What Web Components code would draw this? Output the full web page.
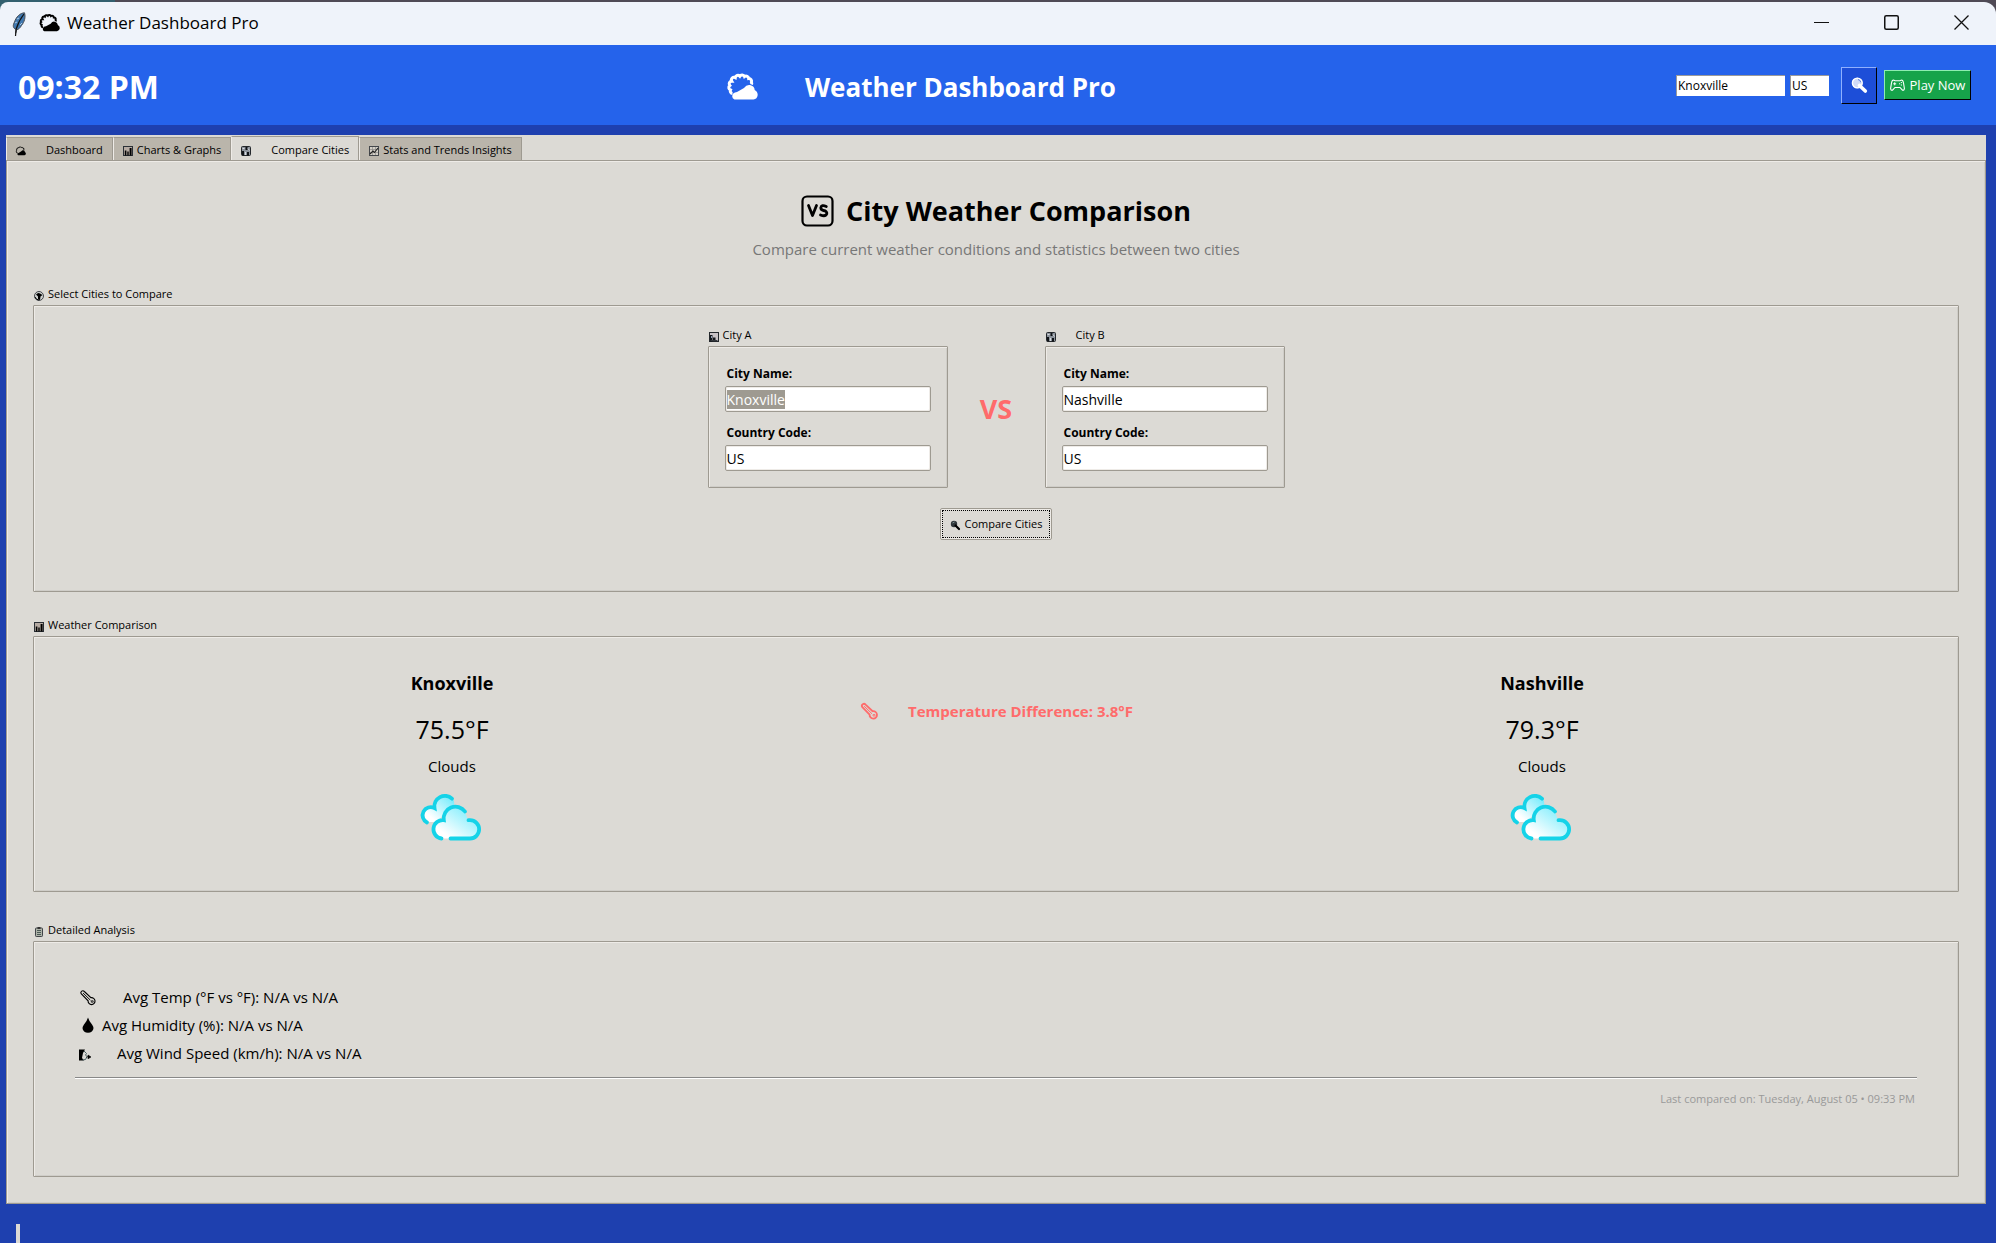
<!DOCTYPE html>
<html lang="en">
<head>
<meta charset="utf-8">
<title>Weather Dashboard Pro</title>
<style>
  html, body { margin: 0; }
  body { font-family: "Open Sans", "Noto Sans", sans-serif; font-size: 11px; line-height: 16px; color: #000; background: #1e40af; }
</style>
</head>
<body>
<weather-app></weather-app>

<script>
const ICONS = {
  suncloud: ['0 0 30 26', `<path d="M4.500 19.500 A2.500 2.500 0 0 1 2.500 16 A2.600 2.600 0 0 1 1.800 11.500 A2.600 2.600 0 0 1 3.800 7.200 A2.600 2.600 0 0 1 7.300 3.600 A2.600 2.600 0 0 1 11.800 2.200 A2.600 2.600 0 0 1 16.500 2.600 A2.600 2.600 0 0 1 20.700 4.600 A2.600 2.600 0 0 1 23.400 8.200 Q24 9.500 23.600 10.500" fill="none" stroke="currentColor" stroke-width="3"/><path d="M6.500 25.500 Q4.200 24.500 4.200 22.200 Q4.500 18.500 9 18 L16 14 Q18.500 10.300 22 11 Q26.500 12 26.700 16 Q29.700 17.500 29.700 21 Q29.200 25 25.500 25.500 Z" fill="currentColor"/>`],
  feather: ['0 0 14 24', `<path d="M3.500 21.500 L4 17.500 C.5 16 .8 13 2.500 10 C4 5 8 1 12.500 .8 C13.800 5 12.500 10 9.500 13.500 C8 16 6.500 17.500 4.600 17.800 Z" fill="#3f77ae" stroke="#4c4f55"/><path d="M3.500 24 L4.200 17 Q6.500 9 12 2" fill="none" stroke="#111" stroke-width="1.200"/><path d="M3 11 l2-1 M5 7 l2-1 M8 13 l2-2" stroke="#aecbe6"/>`],
  minimize: ['0 0 15 15', `<path d="M0 7.500 H15" stroke="currentColor"/>`],
  maximize: ['0 0 15 15', `<rect x=".75" y=".75" width="13.500" height="13.500" rx="1.500" fill="none" stroke="currentColor" stroke-width="1.500"/>`],
  close: ['0 0 15 15', `<path d="M.5 .5 L14.500 14.500 M14.500 .5 L.5 14.500" stroke="currentColor" stroke-width="1.300"/>`],
  magnify: ['0 0 16 16', `<circle cx="6.300" cy="6" r="5.200" fill="currentColor" opacity=".8"/><circle cx="6.300" cy="6" r="4.900" fill="none" stroke="currentColor" stroke-width="1.400"/><path d="M8.500 8.500 L14.300 14" stroke="currentColor" stroke-width="3.600" stroke-linecap="round"/><path d="M7 2.500 a3.500 3.500 0 0 1 2.800 2.800" fill="none" stroke="#5b7fe0"/>`],
  magnifyDark: ['0 0 10 10', `<circle cx="4" cy="4" r="3.200" fill="#30363a"/><path d="M2.500 3 l2-1" stroke="#7b9190"/><path d="M5.500 5.500 L9 9" stroke="#000" stroke-width="2.200" stroke-linecap="round"/>`],
  gamepad: ['0 0 15 12', `<path d="M3.500 1 L5 1.700 H10 L11.500 1 Q13 1 13.500 4 L14.400 9.500 Q14.200 11.600 12.500 11.200 L10 8.500 H5 L2.500 11.200 Q.8 11.600 .6 9.500 L1.500 4 Q2 1 3.500 1 Z" fill="none" stroke="currentColor" stroke-width="1.100"/><path d="M3.200 4.800 h3 M4.700 3.300 v3 M9 4.800 h1.200 M10.800 3.600 h1.200 M10.800 6 h1.200" stroke="currentColor"/>`],
  vs: ['0 0 33 32', `<rect x="1.500" y="1.500" width="30" height="29" rx="4.500" fill="none" stroke="currentColor" stroke-width="2.200"/><path d="M7.500 10.500 L11.500 20.500 L15.500 10.500" fill="none" stroke="currentColor" stroke-width="2.800" stroke-linejoin="round" stroke-linecap="round"/><path d="M25.300 11.500 Q20.500 9.300 19.800 12.800 Q19.800 15 22.500 15.500 Q26.300 16.200 25.800 18.800 Q24.500 22 19.500 20" fill="none" stroke="currentColor" stroke-width="2.800" stroke-linecap="round"/>`],
  bars: ['0 0 10 10', `<rect x=".5" y=".5" width="9" height="9" fill="#b5aaa2" stroke="#2b3036"/><rect x="1.800" y="4.500" width="1.600" height="5" fill="#000"/><rect x="4.300" y="5.500" width="1.400" height="4" fill="#000"/><rect x="6.600" y="2" width="2" height="7.500" fill="#000"/>`],
  city: ['0 0 10 10', `<rect x=".5" y=".5" width="9" height="9" rx="1" fill="#8b929b" stroke="#24282c"/><path d="M1 5 h2 v4.500 h-2 z M6 6 h2 v3.500 h-2 z M4.500 1 h2 v3 h-2 z" fill="#101317"/><path d="M1.500 2.500 h2 M7 2.500 l1.500 2 M4.500 6 v3" stroke="#d8dbe0"/>`],
  cityA: ['0 0 10 10', `<rect x=".5" y=".5" width="9" height="9" fill="#c9c3c6" stroke="#24282c"/><path d="M1 3 h2.500 v6.500 h-2.500 z M4 5.500 h2.500 v3.500 h-2.500 z" fill="#14181d"/><path d="M1.500 8.500 h7" stroke="#35393e"/><path d="M2.500 4 v2" stroke="#8fa0b8"/>`],
  trend: ['0 0 10 10', `<rect x=".5" y=".5" width="9" height="9" fill="#d3cfc6" stroke="#44474b"/><path d="M3.500 1 v8 M6.500 1 v8 M1 3.500 h8 M1 6.500 h8" stroke="#8d8a86" stroke-width=".7"/><path d="M1 8 L4 5 L5.500 6.500 L9 2" fill="none" stroke="#222" stroke-width="1.100"/>`],
  globe: ['0 0 10 10', `<circle cx="5" cy="5" r="4.500" fill="#cfd2d0" stroke="#33363b" stroke-width=".9"/><path d="M2 3.500 Q4 1 6 2.500 L8.500 4 L6.500 5.500 L6 9 L4 8.500 L4 5.500 Z" fill="#000"/><path d="M1 6 Q2 8.500 4.500 9" fill="none" stroke="#000"/>`],
  clip: ['0 0 8 10', `<rect x=".5" y="1" width="7" height="8.500" rx=".8" fill="#aeb3a9" stroke="#404448"/><path d="M2 3.500 h4 M2 5.500 h4 M2 7.500 h4" stroke="#4b5a55"/><rect x="2.500" y="0" width="3" height="2" fill="#333"/>`],
  thermo: ['0 0 17 16', `<path d="M1.800 1.200 Q3.300 .2 4.600 1.600 L11.600 8.200 A3.700 3.700 0 1 1 8.600 11.500 L1.200 4 Q.2 2.300 1.800 1.200 Z" fill="none" stroke="currentColor" stroke-width="var(--line, 1.200)"/><path d="M3.200 3.200 L11 10.800" stroke="currentColor"/><path d="M12 11.500 h2 v1.500 h-2 z" fill="none" stroke="currentColor" stroke-width=".8"/>`],
  drop: ['0 0 12 16', `<path d="M6 .4 Q7 4 10 7.500 Q11.500 9.500 11.500 11 A5.500 4.800 0 0 1 .5 11 Q.5 9.500 2 7.500 Q5 4 6 .4 Z" fill="currentColor"/>`],
  wind: ['0 0 12 12', `<path d="M0 .5 h6 L4 4 L3 9 L5 11.500 H0 Z" fill="#000"/><path d="M5 2 L7.500 4.500 L6.500 6 L8 7.500 L6.500 10.500 L3.500 11" fill="none" stroke="#4a6062"/><path d="M7.500 8 L9.500 7.500 M9 6 L12 8 L9 9.800 Z" fill="#000" stroke="#000" stroke-width=".6"/>`],
  clouds: ['0 0 60 47', `<defs><linearGradient id="g" x1="0" y1="1" x2="1" y2="0"><stop offset=".2" stop-color="#fff"/><stop offset="1" stop-color="#66eafc"/></linearGradient></defs><path d="M5.500 28 A8 8 0 0 1 12.500 14 A10.800 10.800 0 0 1 31 5 Q36 14 22 20 L15 28 Z" fill="url(#g)"/><path d="M5 28.500 A8 8 0 0 1 12.500 14 A10.500 10.500 0 0 1 30 4.700" fill="none" stroke="#15d3e8" stroke-width="3.800" stroke-linecap="round"/><path d="M19.500 44.500 A9.200 9.200 0 0 1 21.800 26.200 A11.800 11.800 0 0 1 43 17.500 L46 26.200 H48 A9 9 0 0 1 48 44.500 Z" fill="url(#g)"/><path d="M19.500 44.500 A9.200 9.200 0 0 1 21.800 26.200 A11.800 11.800 0 0 1 43 17.500 M46.500 26.200 H48 A9 9 0 0 1 48 44.500 H28.500" fill="none" stroke="#15d3e8" stroke-width="3.800" stroke-linecap="round"/>`]
};

const component = (name, html, ready) => customElements.define(name, class extends HTMLElement {
  connectedCallback() {
    if (this.shadowRoot) return;
    const root = this.attachShadow({ mode: 'open' });
    root.innerHTML = typeof html === 'function' ? html(this) : html;
    if (ready) ready(this, root);
  }
});

component('ui-icon', el => {
  const [box, body] = ICONS[el.getAttribute('name')];
  const w = el.getAttribute('w'), h = el.getAttribute('h');
  return `<style>:host{display:inline-flex;flex:none}svg{display:block;overflow:visible}</style>
  <svg width="${w}" height="${h}" viewBox="${box}" aria-hidden="true">${body}</svg>`;
});

component('title-bar', `
<style>
  :host { display: block; background: linear-gradient(90deg, #33606f 115px, #4f4a55 115px); padding-top: 2px; }
  .bar { display: flex; align-items: center; height: 43px; padding-left: 12px; background: #eff3fa; border-radius: 8px 12px 0 0; font-size: 17px; }
  .name { display: flex; align-items: center; gap: 7px; flex: 1; margin-left: 14px; padding-bottom: 2px; }
  button { display: flex; align-items: center; justify-content: center; width: 70px; height: 43px; padding: 0 0 2px; border: 0; background: none; color: #111; }
</style>
<div class="bar">
  <ui-icon name="feather" w="14" h="24"></ui-icon>
  <div class="name"><ui-icon name="suncloud" w="20" h="18"></ui-icon><span>Weather Dashboard Pro</span></div>
  <button aria-label="Minimize"><ui-icon name="minimize" w="15" h="15"></ui-icon></button>
  <button aria-label="Maximize"><ui-icon name="maximize" w="15" h="15"></ui-icon></button>
  <button aria-label="Close"><ui-icon name="close" w="15" h="15"></ui-icon></button>
</div>`);

component('app-header', `
<style>
  :host { display: flex; align-items: center; height: 80px; box-sizing: border-box; padding: 0 25px 0 18px; background: #2563eb; color: #fff; }
  .clock { font-size: 32px; font-weight: 700; line-height: 44px; padding-top: 4px; }
  h1 { display: flex; align-items: center; justify-content: center; gap: 47px; flex: 1; margin: 0; padding: 4px 0 0 9px; font-size: 26px; line-height: 36px; }
  form { display: flex; align-items: center; }
  input { box-sizing: border-box; width: 109px; height: 21px; padding: 0 1px; border: solid; border-width: 1px 0 0 1px; border-color: #9a9a9a; border-radius: 0; background: #fff; color: #000; font: 12px "Open Sans", "Noto Sans", sans-serif; }
  .code { width: 39px; margin: 0 12px 0 5px; }
  button { display: flex; align-items: center; justify-content: center; box-sizing: border-box; padding: 0; border: 1px solid; color: #fff; font: 13px "Open Sans", "Noto Sans", sans-serif; }
  .search { width: 36px; height: 37px; margin-right: 7px; background: #1d4ed8; border-color: #8fb0ff #000 #000 #8fb0ff; }
  .play { width: 87px; height: 30px; gap: 5px; background: #16a34a; border-color: #8eeeb0 #000 #000 #8eeeb0; }
</style>
<div class="clock">09:32 PM</div>
<h1><ui-icon name="suncloud" w="30" h="26"></ui-icon><span>Weather Dashboard Pro</span></h1>
<form onsubmit="return false">
  <input aria-label="City" value="Knoxville">
  <input class="code" aria-label="Country code" value="US">
  <button class="search" aria-label="Search"><ui-icon name="magnify" w="16" h="16"></ui-icon></button>
  <button type="button" class="play"><ui-icon name="gamepad" w="15" h="12"></ui-icon><span>Play Now</span></button>
</form>`);

component('tab-item', el => `
<style>
  :host { display: block; }
  button { display: flex; align-items: center; gap: var(--gap, 4px); box-sizing: border-box; height: 23px; padding: 2px 9px 0; border: 1px solid #9e9a91; border-bottom: 0; border-left-color: #eeebe7; background: #bab5ab; color: #000; font: 11px/16px "Open Sans", "Noto Sans", sans-serif; }
  ui-icon { padding-top: 2px; }
  :host([selected]) button { height: 26px; padding-top: 1px; background: #dcdad5; }
</style>
<button role="tab" aria-selected="${el.hasAttribute('selected')}"><ui-icon name="${el.getAttribute('icon')}" w="10" h="10"></ui-icon><slot></slot></button>`);

component('tab-strip', `
<style>
  :host { display: flex; align-items: flex-end; height: 25px; }
  ::slotted([selected]) { margin-bottom: -2px; }
</style><slot></slot>`);

component('group-box', el => `
<style>
  :host { display: block; }
  .caption { display: flex; align-items: center; gap: var(--gap, 4px); margin-bottom: 3px; padding-left: 1px; line-height: 16px; }
  .caption ui-icon { padding-top: 4px; }
  .frame { border: 1px solid #9e9a91; border-radius: 1px; box-shadow: inset 1px 1px #eeebe7, inset -1px -1px #cfcdc8; padding: 1px; }
</style>
<div class="caption"><ui-icon name="${el.getAttribute('icon')}" w="10" h="10"></ui-icon><span>${el.getAttribute('caption')}</span></div>
<div class="frame"><slot></slot></div>`);

component('city-form', el => `
<style>
  :host { display: block; width: 206px; padding: 18px 15px 15px; }
  label { display: block; margin-bottom: 4px; padding-left: 2px; font-size: 12px; font-weight: 700; line-height: 16px; }
  input { display: block; box-sizing: border-box; width: 100%; height: 26px; padding: 0 1px; border: 1px solid #9e9a91; border-radius: 2px; outline: 0; background: #fff; box-shadow: inset 1px 1px #eeebe7, inset -1px -1px #eeebe7; color: #000; font: 14px "Open Sans", "Noto Sans", sans-serif; }
  input + label { margin-top: 13px; }
  ::selection { background: #9e9a91; color: #fff; }
</style>
<label for="city">City Name:</label><input id="city" value="${el.getAttribute('city')}">
<label for="code">Country Code:</label><input id="code" value="US">`,
(el, root) => {
  if (el.hasAttribute('active')) {
    const field = root.getElementById('city');
    field.focus();
    field.select();
  }
});

component('compare-form', `
<style>
  :host { display: flex; flex-direction: column; align-items: center; padding: 20px 0 50px; }
  .cities { display: flex; align-items: center; }
  .vs { width: 97px; padding-top: 2px; color: #ff6b6b; font-size: 27px; font-weight: 700; line-height: 36px; text-align: center; }
  button { display: flex; margin-top: 20px; padding: 1px; border: 1px solid #9e9a91; border-radius: 2px; background: #eeebe7; color: #000; font: 11px/16px "Open Sans", "Noto Sans", sans-serif; }
  .face { display: flex; align-items: center; gap: 5px; padding: 5px 7px; border: 1px dotted #000; background: #dcdad5; }
  .face ui-icon { padding-top: 2px; }
</style>
<div class="cities">
  <group-box icon="cityA" caption="City A"><city-form city="Knoxville" active></city-form></group-box>
  <div class="vs">VS</div>
  <group-box icon="city" caption="City B" style="--gap: 20px"><city-form city="Nashville"></city-form></group-box>
</div>
<button><span class="face"><ui-icon name="magnifyDark" w="10" h="10"></ui-icon><span>Compare Cities</span></span></button>`);

component('city-result', el => `
<style>
  :host { display: flex; flex-direction: column; align-items: center; flex: 1; }
  h3 { margin: 0; font-size: 18px; line-height: 24px; }
  .temp { margin: 17px 0 10px; font-size: 25px; line-height: 34px; }
  .sky { margin-bottom: 18px; font-size: 15px; line-height: 20px; }
</style>
<h3>${el.getAttribute('city')}</h3>
<div class="temp">${el.getAttribute('temp')}</div>
<div class="sky">Clouds</div>
<ui-icon name="clouds" w="60" h="47"></ui-icon>`);

component('compare-result', `
<style>
  :host { display: flex; padding: 33px 18px 49px 20px; }
  .diff { display: flex; align-items: center; align-self: flex-start; justify-content: center; gap: 30px; width: 296px; padding-top: 30px; color: #ff6b6b; font-size: 15px; font-weight: 700; line-height: 20px; --line: 1.800; }
</style>
<city-result city="Knoxville" temp="75.5°F"></city-result>
<div class="diff"><ui-icon name="thermo" w="17" h="16"></ui-icon><span>Temperature Difference: 3.8°F</span></div>
<city-result city="Nashville" temp="79.3°F"></city-result>`);

component('detail-analysis', `
<style>
  :host { display: block; padding: 40px 40px 68px; }
  ul { margin: 0; padding: 0 0 0 4px; list-style: none; font-size: 15px; line-height: 28px; }
  li { display: flex; align-items: center; }
  .pic { display: flex; justify-content: center; width: 17px; }
  .temp { gap: 27px; }
  .humid { gap: 6px; }
  .wind { gap: 21px; }
  .wind .pic { justify-content: flex-start; padding-top: 4px; }
  hr { height: 1px; margin: 10px 0 12px; border: 0; border-top: 1px solid #888; background: #fff; }
  .stamp { padding-right: 2px; color: #999; text-align: right; }
</style>
<ul>
  <li class="temp"><span class="pic"><ui-icon name="thermo" w="16" h="15"></ui-icon></span><span>Avg Temp (°F vs °F): N/A vs N/A</span></li>
  <li class="humid"><span class="pic"><ui-icon name="drop" w="12" h="16"></ui-icon></span><span>Avg Humidity (%): N/A vs N/A</span></li>
  <li class="wind"><span class="pic"><ui-icon name="wind" w="12" h="12"></ui-icon></span><span>Avg Wind Speed (km/h): N/A vs N/A</span></li>
</ul>
<hr>
<div class="stamp">Last compared on: Tuesday, August 05 • 09:33 PM</div>`);

component('weather-app', `
<style>
  :host { display: flex; flex-direction: column; min-height: 100vh; background: #1e40af; }
  main { display: flex; flex-direction: column; flex: 1; margin: 10px 10px 0 6px; background: #dcdad5; }
  .pane { flex: 1; padding: 31px 25px 25px; border: 1px solid #9e9a91; box-shadow: inset 1px 1px #eeebe7, inset -1px -1px #cfcdc8; }
  h2 { display: flex; align-items: center; justify-content: center; gap: 12px; margin: 0 0 8px; font-size: 27px; line-height: 38px; }
  p { margin: 0 0 26px; color: #777; font-size: 15px; line-height: 22px; text-align: center; }
  .pane > group-box { padding: 0 1px; }
  .result { margin: 25px 0 30px; }
  footer { height: 19px; padding: 20px 16px 0; }
  .cursor { width: 4px; height: 19px; background: #dcdad5; }
</style>
<title-bar></title-bar>
<app-header></app-header>
<main>
  <tab-strip role="tablist">
    <tab-item icon="suncloud" style="--gap: 20px">Dashboard</tab-item>
    <tab-item icon="bars">Charts &amp; Graphs</tab-item>
    <tab-item icon="city" style="--gap: 20px" selected>Compare Cities</tab-item>
    <tab-item icon="trend">Stats and Trends Insights</tab-item>
  </tab-strip>
  <div class="pane">
    <h2><ui-icon name="vs" w="33" h="32"></ui-icon><span>City Weather Comparison</span></h2>
    <p>Compare current weather conditions and statistics between two cities</p>
    <group-box icon="globe" caption="Select Cities to Compare"><compare-form></compare-form></group-box>
    <group-box class="result" icon="bars" caption="Weather Comparison"><compare-result></compare-result></group-box>
    <group-box icon="clip" caption="Detailed Analysis"><detail-analysis></detail-analysis></group-box>
  </div>
</main>
<footer><div class="cursor"></div></footer>`);
</script>
</body>
</html>
